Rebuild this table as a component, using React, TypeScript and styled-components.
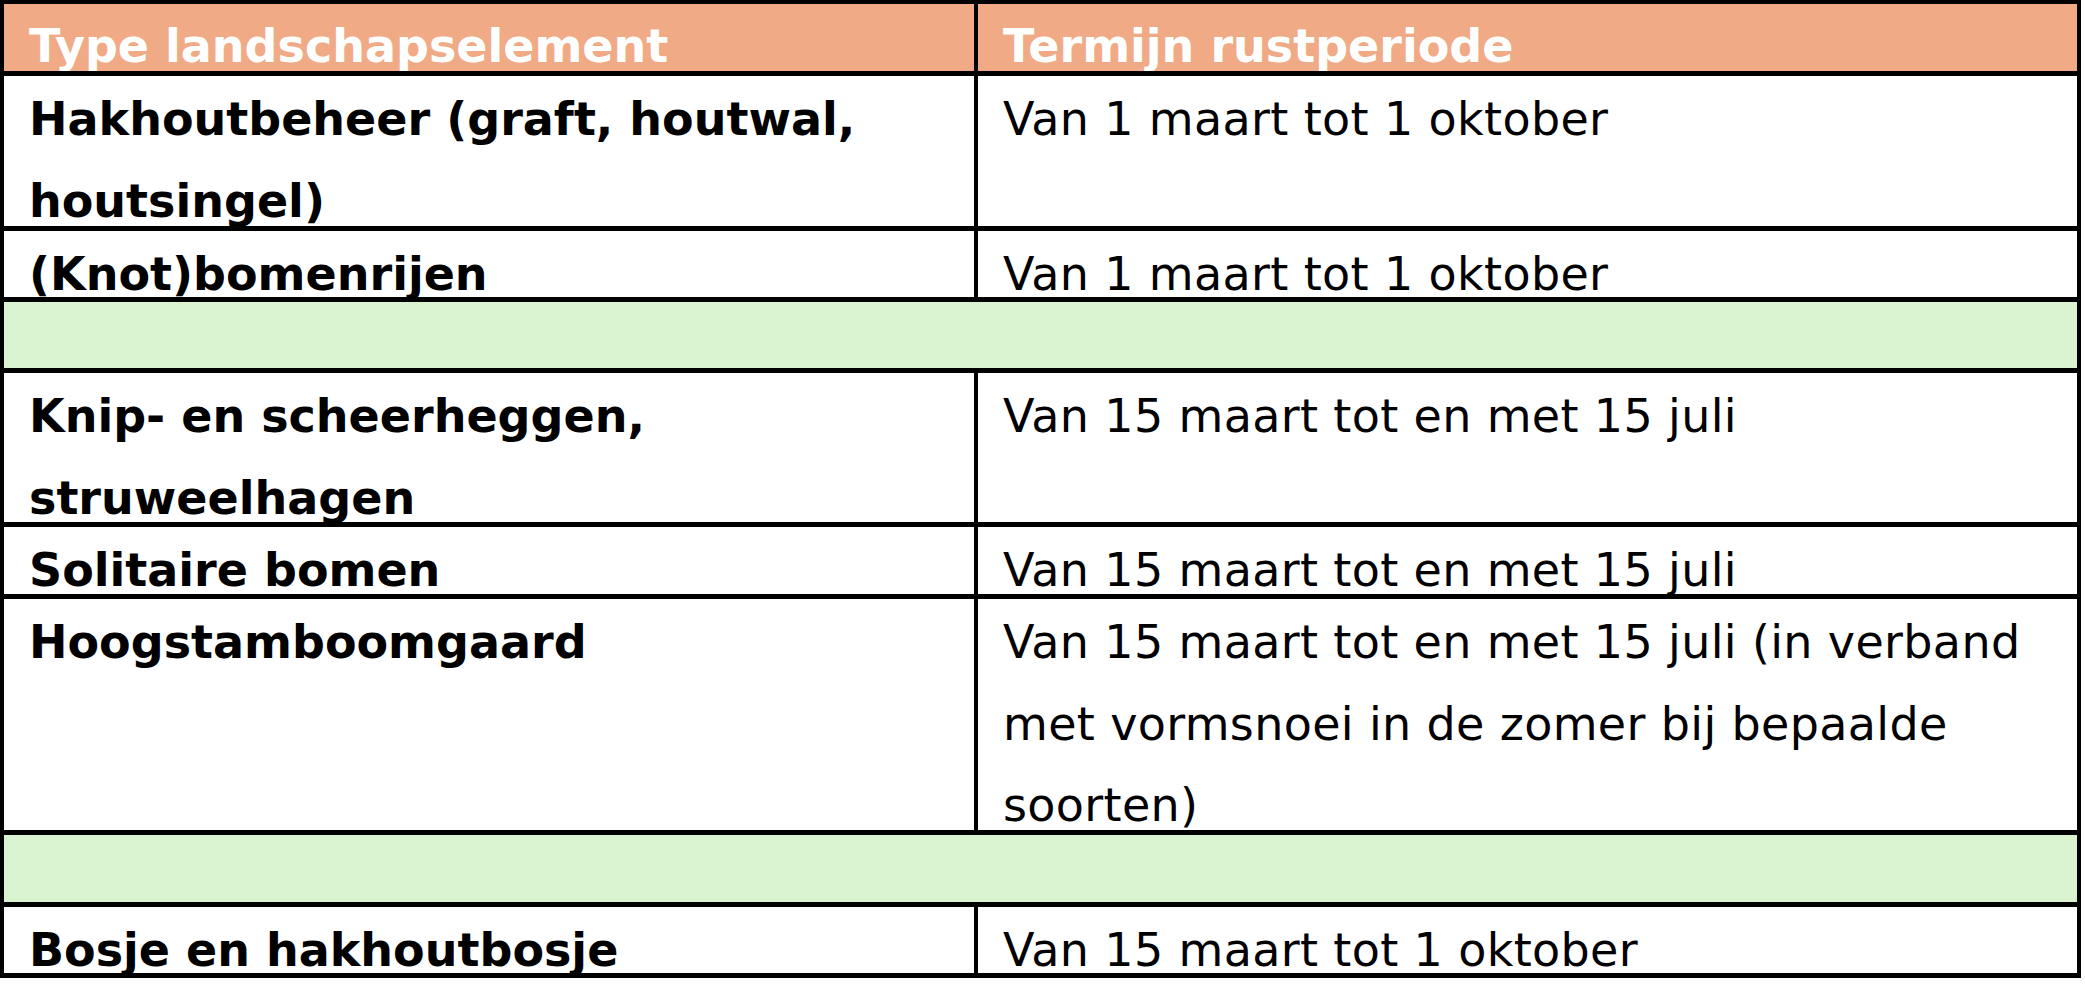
import React from "react";
import styled, { createGlobalStyle } from "styled-components";

const Global = createGlobalStyle`
  html, body {
    margin: 0;
    padding: 0;
    background: #ffffff;
  }
  body {
    font-family: "DejaVu Sans", Verdana, sans-serif;
  }
`;

const Table = styled.div`
  width: 2081px;
  box-sizing: border-box;
  border-style: solid;
  border-color: #000;
  border-width: 4px 4px 5px 4px;
  display: flex;
  flex-direction: column;
  font-family: "DejaVu Sans", Verdana, sans-serif;
  font-size: 46px;
  line-height: 81.5px;
  color: #000;
  & > * + * {
    border-top: 5px solid #000;
  }
`;

const Row = styled.div<{ $h: number; $bg?: string }>`
  display: grid;
  grid-template-columns: 970px 1099px;
  height: ${(p) => p.$h}px;
  background: ${(p) => p.$bg || "#ffffff"};
`;

const Band = styled.div<{ $h: number }>`
  height: ${(p) => p.$h}px;
  background: #d9f2d0;
`;

const Cell = styled.div<{ $bold?: boolean; $head?: boolean }>`
  box-sizing: border-box;
  padding: ${(p) => (p.$head ? "2px" : "3px")} 12px 0 25px;
  overflow: hidden;
  font-weight: ${(p) => (p.$bold ? 700 : 400)};
  letter-spacing: ${(p) => (p.$bold ? "0" : "0.35px")};
  color: ${(p) => (p.$head ? "#ffffff" : "#000000")};
  & + & {
    border-left: 4px solid #000;
  }
`;

type Item =
  | { kind: "row"; a: string; b: string; h: number }
  | { kind: "band"; h: number };

const items: Item[] = [
  { kind: "row", a: "Hakhoutbeheer (graft, houtwal, houtsingel)", b: "Van 1 maart tot 1 oktober", h: 150 },
  { kind: "row", a: "(Knot)bomenrijen", b: "Van 1 maart tot 1 oktober", h: 66 },
  { kind: "band", h: 66 },
  { kind: "row", a: "Knip- en scheerheggen, struweelhagen", b: "Van 15 maart tot en met 15 juli", h: 149 },
  { kind: "row", a: "Solitaire bomen", b: "Van 15 maart tot en met 15 juli", h: 67 },
  {
    kind: "row",
    a: "Hoogstamboomgaard",
    b: "Van 15 maart tot en met 15 juli (in verband met vormsnoei in de zomer bij bepaalde soorten)",
    h: 231,
  },
  { kind: "band", h: 67 },
  { kind: "row", a: "Bosje en hakhoutbosje", b: "Van 15 maart tot 1 oktober", h: 66 },
];

export default function App() {
  return (
    <>
      <Global />
      <Table>
        <Row $h={67} $bg="#f0aa86">
          <Cell $bold $head>Type landschapselement</Cell>
          <Cell $bold $head>Termijn rustperiode</Cell>
        </Row>
        {items.map((it, i) =>
          it.kind === "band" ? (
            <Band key={i} $h={it.h} />
          ) : (
            <Row key={i} $h={it.h}>
              <Cell $bold>{it.a}</Cell>
              <Cell>{it.b}</Cell>
            </Row>
          )
        )}
      </Table>
    </>
  );
}
